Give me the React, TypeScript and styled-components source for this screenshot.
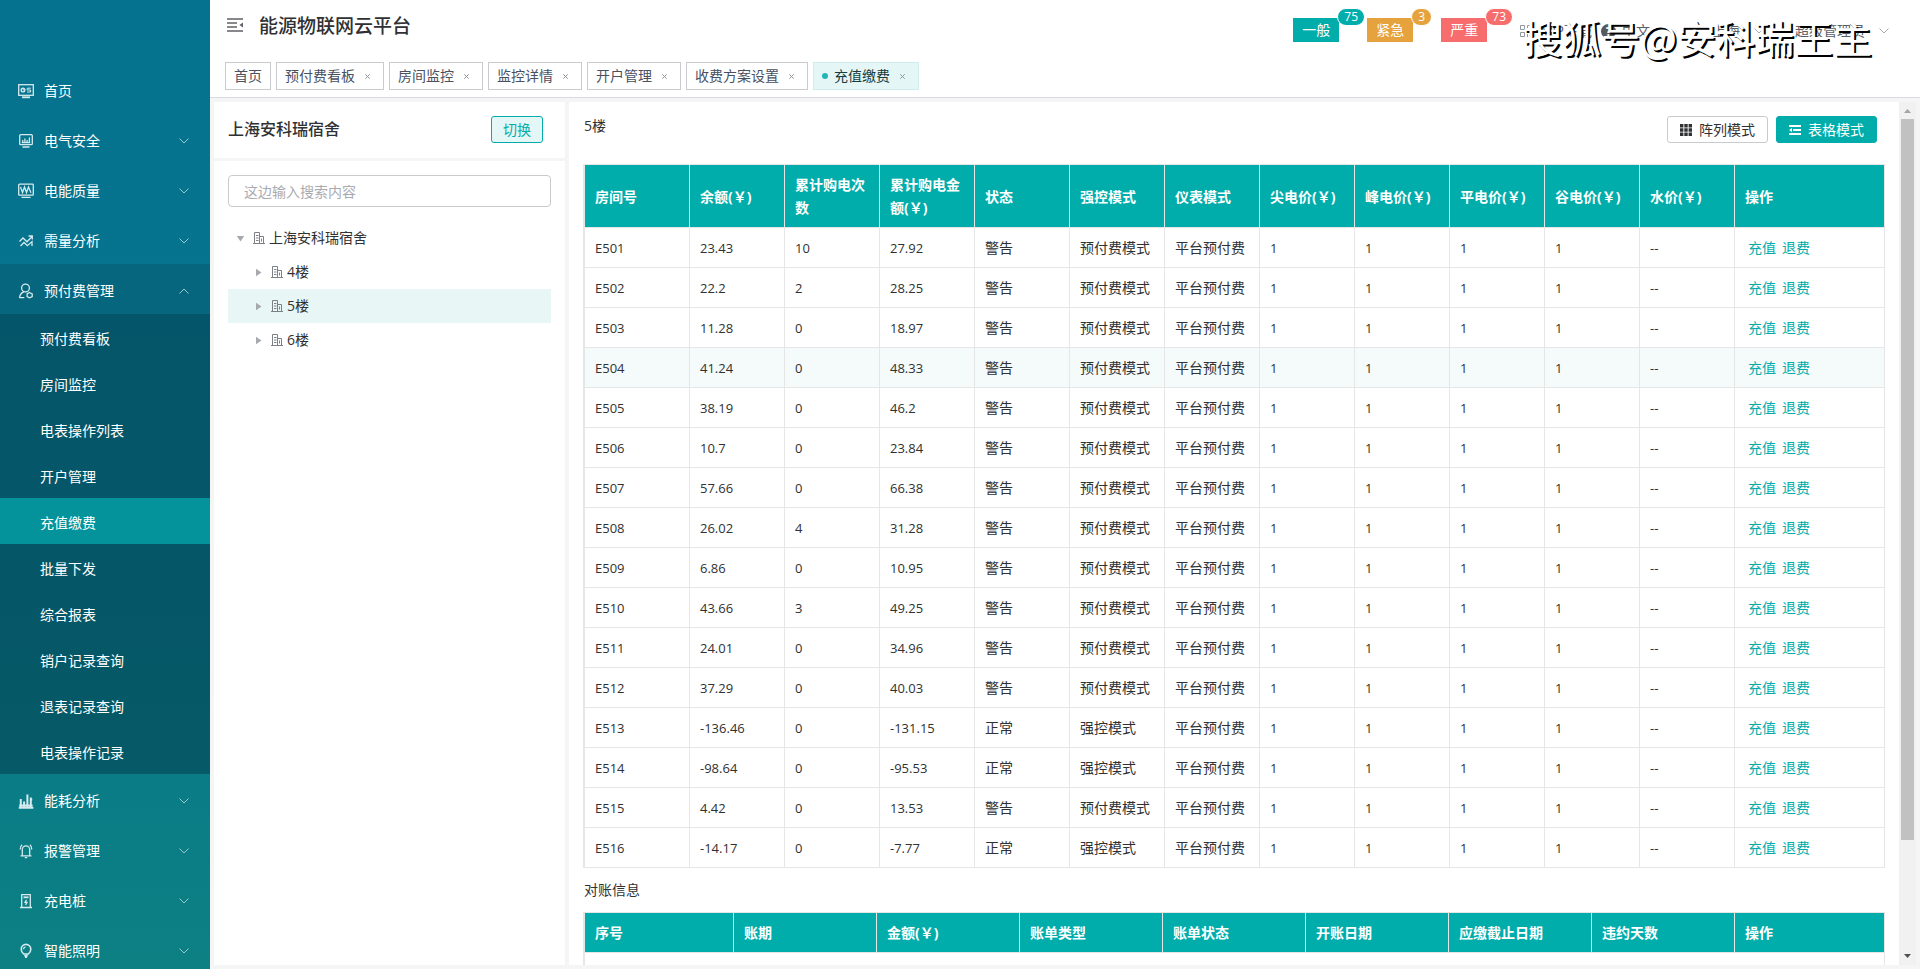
import React from "react";
import styled, { createGlobalStyle } from "styled-components";

const teal = "#00adab";
const line = "#e6e6e6";

const GlobalStyle = createGlobalStyle`
  * { box-sizing: border-box; }
  body {
    margin: 0;
    background: #f5f5f6;
    color: #303133;
    font: 14px/20px "Open Sans", "Noto Sans CJK SC", sans-serif;
  }
  button, input { font: inherit; }
  a { color: inherit; text-decoration: none; }
`;

const Shell = styled.div`
  display: flex;
  height: 100vh;
  overflow: hidden;
`;

/* ---------- sidebar ---------- */

const Sidebar = styled.nav`
  flex: 0 0 210px;
  padding-top: 64px;
  overflow: hidden;
  color: #fff;
  background: linear-gradient(180deg, #05738f 0%, #06748d 40%, #0c8083 100%);
`;

const MenuItem = styled.a<{ $open?: boolean }>`
  display: flex;
  align-items: center;
  height: 50px;
  padding: 3px 20px 0 18px;
  background: ${(p) => (p.$open ? "rgba(6, 86, 106, 0.45)" : "transparent")};
`;

const MenuIcon = styled.svg`
  width: 16px;
  height: 16px;
  margin-right: 10px;
  fill: none;
  stroke: #d5eaee;
  stroke-width: 1.3;
`;

const Arrow = styled.svg<{ $up?: boolean; $dark?: boolean }>`
  width: 12px;
  height: 6px;
  fill: none;
  stroke: ${(p) => (p.$dark ? "#a9adb3" : "#9cc8d0")};
  transform: ${(p) => (p.$up ? "rotate(180deg)" : "none")};
`;

const MenuLabel = styled.span`
  flex: 1;
`;

const SubMenu = styled.div`
  background: linear-gradient(180deg, #05556a, #065966);
`;

const SubItem = styled.a<{ $active?: boolean }>`
  display: block;
  padding: 3px 0 0 40px;
  line-height: 43px;
  background: ${(p) => (p.$active ? "#04939a" : "transparent")};
`;

/* ---------- header ---------- */

const Content = styled.div`
  flex: 1;
  min-width: 0;
  display: flex;
  flex-direction: column;
`;

const Header = styled.header`
  position: relative;
  height: 98px;
  background: #fff;
  border-bottom: 1px solid #d8dce0;
`;

const TopBar = styled.div`
  display: flex;
  height: 62px;
  padding: 0 30px 0 17px;
`;

const FoldButton = styled.button`
  width: 16px;
  height: 16px;
  margin: 17px 16px 0 0;
  padding: 0;
  border: 0;
  background: none;
  svg { display: block; }
`;

const Title = styled.h1`
  flex: 1;
  margin: 14px 0 0;
  font-size: 19px;
  line-height: 24px;
  font-weight: 500;
`;

const Alarms = styled.div`
  display: flex;
  gap: 28px;
  margin: 18px 33px 0 0;
`;

const Alarm = styled.a<{ $color: string }>`
  position: relative;
  width: 46px;
  height: 24px;
  line-height: 24px;
  text-align: center;
  color: #fff;
  background: ${(p) => p.$color};
`;

const Badge = styled.span<{ $color: string }>`
  position: absolute;
  left: 44px;
  top: -10px;
  height: 18px;
  padding: 0 6px;
  border: 1px solid #fff;
  border-radius: 9px;
  font-size: 12px;
  line-height: 16px;
  background: ${(p) => p.$color};
`;

const Tools = styled.div`
  display: flex;
  align-items: center;
  height: 62px;
  color: #5a5e66;
  white-space: nowrap;
`;

const Tool = styled.a<{ $gap: number }>`
  display: flex;
  align-items: center;
  gap: 6px;
  margin-right: ${(p) => p.$gap}px;
`;

const UserTool = styled(Tool)`
  gap: 13px;
`;

const Help = styled.span`
  width: 15px;
  height: 15px;
  border-radius: 8px;
  font-size: 12px;
  line-height: 15px;
  font-weight: 700;
  text-align: center;
  color: #fff;
  background: #55585e;
`;

const Watermark = styled.div`
  position: absolute;
  right: 48px;
  top: 12px;
  font-size: 39px;
  line-height: 48px;
  color: #fff;
  text-shadow: 2px 2px 0 #000;
  font-family: "Noto Sans CJK SC", sans-serif;
  white-space: nowrap;
`;

const Tabs = styled.div`
  display: flex;
  gap: 5px;
  padding-left: 15px;
`;

const Tab = styled.a<{ $active?: boolean }>`
  display: flex;
  align-items: center;
  height: 28px;
  padding: 0 8px;
  border: 1px solid ${(p) => (p.$active ? "#ccefee" : "#c9cbcf")};
  color: ${(p) => (p.$active ? "#163c3e" : "#495060")};
  background: ${(p) => (p.$active ? "#e4f6f5" : "#fff")};
`;

const Dot = styled.i`
  width: 6px;
  height: 6px;
  margin-right: 6px;
  border-radius: 3px;
  background: #25b3b6;
`;

const TabClose = styled.button`
  display: flex;
  align-items: center;
  justify-content: center;
  width: 16px;
  height: 16px;
  margin-left: 4px;
  padding: 0;
  border: 0;
  background: none;
`;

/* ---------- workspace ---------- */

const Workspace = styled.div`
  flex: 1;
  min-height: 0;
  display: flex;
  gap: 4px;
  padding: 4px;
`;

const LeftColumn = styled.aside`
  flex: 0 0 351px;
  display: flex;
  flex-direction: column;
  gap: 3px;
`;

const ProjectBar = styled.div`
  display: flex;
  align-items: flex-start;
  justify-content: space-between;
  height: 56px;
  padding: 14px 22px 0 14px;
  background: #fff;
`;

const ProjectName = styled.h2`
  margin: 0;
  font-size: 16px;
  line-height: 26px;
  font-weight: 500;
`;

const SwitchButton = styled.button`
  width: 52px;
  height: 27px;
  padding: 0;
  border: 1px solid ${teal};
  border-radius: 3px;
  color: ${teal};
  background: #e5f6f6;
`;

const TreePanel = styled.div`
  flex: 1;
  padding: 14px;
  background: #fff;
`;

const Search = styled.input`
  display: block;
  width: 100%;
  height: 32px;
  margin-bottom: 14px;
  padding: 0 15px;
  border: 1px solid #c8cacd;
  border-radius: 4px;
  &::placeholder { color: #a9abb0; opacity: 1; }
`;

const TreeRow = styled.div<{ $level: number; $active?: boolean }>`
  display: flex;
  align-items: center;
  height: 34px;
  padding-left: ${(p) => 8 + p.$level * 18}px;
  background: ${(p) => (p.$active ? "#e8f7f6" : "transparent")};
`;

const Caret = styled.svg`
  width: 9px;
  height: 9px;
  margin-right: 8px;
  fill: #a6a9ae;
`;

const BuildingIcon = styled.svg`
  width: 12px;
  height: 12px;
  margin-right: 4px;
  fill: none;
  stroke: #7d8087;
`;

const Main = styled.main`
  flex: 1;
  min-width: 0;
  display: flex;
  background: #fff;
`;

const Body = styled.div`
  flex: 1;
  min-width: 0;
  padding: 0 14px;
  overflow: hidden;
`;

const Toolbar = styled.div`
  display: flex;
  align-items: flex-start;
  gap: 8px;
  height: 62px;
  padding: 14px 8px 0 1px;
`;

const FloorName = styled.span`
  flex: 1;
`;

const ModeButton = styled.button<{ $primary?: boolean }>`
  display: flex;
  align-items: center;
  gap: 7px;
  height: 27px;
  padding: 0 12px;
  border: 1px solid ${(p) => (p.$primary ? teal : "#c8cacd")};
  border-radius: 3px;
  color: ${(p) => (p.$primary ? "#fff" : "#303133")};
  background: ${(p) => (p.$primary ? teal : "#fff")};
`;

const Table = styled.table`
  width: 100%;
  table-layout: fixed;
  border-collapse: separate;
  border-spacing: 0;
  border-top: 1px solid ${line};
  border-left: 2px solid ${line};
`;

const Col = styled.col<{ $width?: number }>`
  width: ${(p) => (p.$width ? `${p.$width}px` : "auto")};
`;

const Th = styled.th`
  height: 40px;
  padding: 8px 10px;
  border-right: 1px solid ${line};
  border-bottom: 1px solid ${line};
  line-height: 23px;
  font-weight: 700;
  text-align: left;
  color: #fff;
  background: ${teal};
`;

const Row = styled.tr<{ $hover?: boolean }>`
  background: ${(p) => (p.$hover ? "#f5fafb" : "#fff")};
`;

const Td = styled.td<{ $numeric?: boolean }>`
  height: 40px;
  padding: 0 10px;
  border-right: 1px solid ${line};
  border-bottom: 1px solid ${line};
  font-size: ${(p) => (p.$numeric ? 13 : 14)}px;
  white-space: nowrap;
`;

const Actions = styled.div`
  display: flex;
  gap: 6px;
  padding-left: 3px;
  color: ${teal};
`;

const SectionTitle = styled.h3`
  margin: 0;
  padding: 12px 0 12px 1px;
  font-size: 14px;
  line-height: 20px;
  font-weight: 400;
`;

const Rail = styled.div`
  flex: 0 0 17px;
  display: flex;
  flex-direction: column;
  background: #f1f1f1;
`;

const RailArrow = styled.svg`
  width: 17px;
  height: 17px;
`;

const Track = styled.div`
  flex: 1;
  padding: 0 2px;
`;

const Thumb = styled.div`
  height: 87%;
  background: #c1c1c1;
`;

/* ---------- data ---------- */

const icons: Record<string, React.ReactNode> = {
  home: (
    <>
      <rect x="0.7" y="1.7" width="14.6" height="10.6" />
      <path d="M4 14.3h8" strokeWidth="1.8" />
      <circle cx="5" cy="7" r="1.9" />
      <path d="M5 5v2h2M12.8 5.2H9.2V7h3.4v2H9" strokeWidth="1" />
    </>
  ),
  safety: (
    <>
      <rect x="1.7" y="1.7" width="12.6" height="10" rx="1" />
      <path d="M4.5 14h7M4.7 9.8V7M6.9 9.8V5.6M9.1 9.8V7M11.4 9.8V4.6M3.8 9.6h8.4" />
    </>
  ),
  quality: (
    <>
      <rect x="0.7" y="1.2" width="14.6" height="11" rx="0.8" />
      <path d="M3.5 14.4h9M2.5 4l2 5.5 2-5.5 2 5.5 2-5.5 2.5 5.8" />
    </>
  ),
  demand: (
    <path d="M1.5 8.5L5 5l4 3.8 5-5.3M10.5 3h3.8v3.6M2.5 13L6 9.5l3.4 3.2L14 8.6V13" />
  ),
  prepay: (
    <>
      <circle cx="7.5" cy="5" r="3.9" />
      <path d="M1.5 15c.3-3.3 2-5.3 4.6-6.3M1.5 14.6h4.8" />
      <path d="M11.5 9.5l2.7 1.4v2.8l-2.7 1.2-2.4-1.2v-2.8z" />
    </>
  ),
  energy: (
    <path
      d="M.8 14.8h14.6M2.8 14V6M6.1 14V8.5M9.4 14V1.6M12.8 14V4.5M1.2 12.6h13.4M1.8 8h2M11.8 6.5h2.4"
      strokeWidth="2"
    />
  ),
  alarm: (
    <>
      <path d="M2.5 12.8h11M4.3 12.5V6.6a3.7 3.7 0 0 1 7.4 0v5.9M6.8 14.7h2.4" />
      <path d="M2.2 6.5c0-2 .6-3.7 1.9-4.7M13.8 6.5c0-2-.6-3.7-1.9-4.7" />
    </>
  ),
  charger: (
    <>
      <path d="M3.7 14V1.6h8.6V14M2 14.5h12" />
      <path d="M5.5 4.3h5" strokeWidth="1.8" />
      <path d="M8.5 6.8L7 9.3h2l-1.4 2.6" />
    </>
  ),
  light: (
    <>
      <path d="M5.8 11C4 9.8 3.2 8.3 3.2 6.2a4.8 4.8 0 0 1 9.6 0c0 2.1-.8 3.6-2.6 4.8z" strokeWidth="1.6" />
      <path d="M6.2 12.7h3.6M7 14h2" strokeWidth="1.8" />
      <path d="M5.5 6.2a2.5 2.5 0 0 1 2-2.3" />
    </>
  ),
};

const menuTop = [
  ["home", "首页"],
  ["safety", "电气安全"],
  ["quality", "电能质量"],
  ["demand", "需量分析"],
];
const menuBottom = [
  ["energy", "能耗分析"],
  ["alarm", "报警管理"],
  ["charger", "充电桩"],
  ["light", "智能照明"],
];
const subMenu = [
  "预付费看板", "房间监控", "电表操作列表", "开户管理", "充值缴费",
  "批量下发", "综合报表", "销户记录查询", "退表记录查询", "电表操作记录",
];
const tabs = ["首页", "预付费看板", "房间监控", "监控详情", "开户管理", "收费方案设置", "充值缴费"];
const current = "充值缴费";

const roomHeads = [
  "房间号", "余额(￥)", "累计购电次数", "累计购电金额(￥)", "状态", "强控模式", "仪表模式",
  "尖电价(￥)", "峰电价(￥)", "平电价(￥)", "谷电价(￥)", "水价(￥)", "操作",
];
const billHeads = ["序号", "账期", "金额(￥)", "账单类型", "账单状态", "开账日期", "应缴截止日期", "违约天数", "操作"];

const rooms: [string, string, string, string, boolean?][] = [
  ["E501", "23.43", "10", "27.92"],
  ["E502", "22.2", "2", "28.25"],
  ["E503", "11.28", "0", "18.97"],
  ["E504", "41.24", "0", "48.33"],
  ["E505", "38.19", "0", "46.2"],
  ["E506", "10.7", "0", "23.84"],
  ["E507", "57.66", "0", "66.38"],
  ["E508", "26.02", "4", "31.28"],
  ["E509", "6.86", "0", "10.95"],
  ["E510", "43.66", "3", "49.25"],
  ["E511", "24.01", "0", "34.96"],
  ["E512", "37.29", "0", "40.03"],
  ["E513", "-136.46", "0", "-131.15", true],
  ["E514", "-98.64", "0", "-95.53", true],
  ["E515", "4.42", "0", "13.53"],
  ["E516", "-14.17", "0", "-7.77", true],
];

const alarms: [string, number, string][] = [
  ["一般", 75, teal],
  ["紧急", 3, "#e6a23c"],
  ["严重", 73, "#f76c6c"],
];

/* ---------- parts ---------- */

const Chevron = ({ up, dark }: { up?: boolean; dark?: boolean }) => (
  <Arrow $up={up} $dark={dark} viewBox="0 0 12 6" aria-hidden="true">
    <path d="M1.5.5L6 5 10.5.5" />
  </Arrow>
);

const Entry = ({ icon, label, open }: { icon: string; label: string; open?: boolean }) => (
  <MenuItem href="#" $open={open}>
    <MenuIcon viewBox="0 0 16 16" aria-hidden="true">{icons[icon]}</MenuIcon>
    <MenuLabel>{label}</MenuLabel>
    {icon !== "home" && <Chevron up={open} />}
  </MenuItem>
);

const TreeNode = ({ label, level, active }: { label: string; level: number; active?: boolean }) => (
  <TreeRow $level={level} $active={active}>
    <Caret viewBox="0 0 9 9" aria-hidden="true">
      <path d={level ? "M2 .8v7.4l5.5-3.7z" : "M.8 2h7.4L4.5 7.5z"} />
    </Caret>
    <BuildingIcon viewBox="0 0 12 12" aria-hidden="true">
      <path d="M0 11.5h12M1.500 11.5V.5h5v11M6.500 4.500h4v7M3 3.500h2.500M3 6h2.500M3 8.500h2.500M8.500 6.500v3" />
    </BuildingIcon>
    {label}
  </TreeRow>
);

export default function App() {
  return (
    <>
      <GlobalStyle />
      <Shell>
        <Sidebar>
          {menuTop.map(([icon, label]) => <Entry key={label} icon={icon} label={label} />)}
          <Entry icon="prepay" label="预付费管理" open />
          <SubMenu>
            {subMenu.map((label) => (
              <SubItem key={label} href="#" $active={label === current}>{label}</SubItem>
            ))}
          </SubMenu>
          {menuBottom.map(([icon, label]) => <Entry key={label} icon={icon} label={label} />)}
        </Sidebar>

        <Content>
          <Header>
            <TopBar>
              <FoldButton aria-label="收起菜单">
                <svg width="16" height="16" viewBox="0 0 16 16" fill="none" stroke="#5f6268" strokeWidth="1.5">
                  <path d="M0 2h16M0 6h10M0 10h10M0 14h16" />
                  <path d="M16 5.5v5L12.5 8z" fill="#5f6268" stroke="none" />
                </svg>
              </FoldButton>
              <Title>能源物联网云平台</Title>
              <Alarms>
                {alarms.map(([label, count, color]) => (
                  <Alarm key={label} href="#" $color={color}>
                    {label}
                    <Badge $color={color}>{count}</Badge>
                  </Alarm>
                ))}
              </Alarms>
              <Tools>
                <Tool href="#" $gap={9}>
                  <svg width="12" height="12" viewBox="0 0 12 12" fill="none" stroke="#92969c">
                    <path d="M.5.5h4v4h-4zM7.5.5h4v4h-4zM.5 7.5h4v4h-4zM7 7.5h2M11.5 7v2M7.5 9v3M9.5 10.5h2" />
                  </svg>
                  APP下载
                </Tool>
                <Tool href="#" $gap={62}><Help>?</Help> 中文</Tool>
                <UserTool href="#" $gap={30}>上海 <Chevron dark /></UserTool>
                <UserTool href="#" $gap={0}>超级管理员 <Chevron dark /></UserTool>
              </Tools>
            </TopBar>
            <Tabs>
              {tabs.map((label, i) => (
                <Tab key={label} href="#" $active={label === current}>
                  {label === current && <Dot />}
                  {label}
                  {i > 0 && (
                    <TabClose aria-label={`关闭${label}`}>
                      <svg width="5" height="5" viewBox="0 0 5 5" stroke="#8f949b">
                        <path d="M.3.3l4.4 4.4M4.7.3L.3 4.7" />
                      </svg>
                    </TabClose>
                  )}
                </Tab>
              ))}
            </Tabs>
            <Watermark>搜狐号@安科瑞王主</Watermark>
          </Header>

          <Workspace>
            <LeftColumn>
              <ProjectBar>
                <ProjectName>上海安科瑞宿舍</ProjectName>
                <SwitchButton>切换</SwitchButton>
              </ProjectBar>
              <TreePanel>
                <Search type="text" aria-label="搜索" placeholder="这边输入搜索内容" />
                <TreeNode level={0} label="上海安科瑞宿舍" />
                <TreeNode level={1} label="4楼" />
                <TreeNode level={1} label="5楼" active />
                <TreeNode level={1} label="6楼" />
              </TreePanel>
            </LeftColumn>

            <Main>
              <Body>
                <Toolbar>
                  <FloorName>5楼</FloorName>
                  <ModeButton>
                    <svg width="12" height="12" viewBox="0 0 12 12" fill="#303133">
                      <path d="M0 0h3.4v3.4H0zM4.3 0h3.4v3.4H4.3zM8.6 0H12v3.4H8.6zM0 4.3h3.4v3.4H0zM4.3 4.3h3.4v3.4H4.3zM8.6 4.3H12v3.4H8.6zM0 8.6h3.4V12H0zM4.3 8.6h3.4V12H4.3zM8.6 8.6H12V12H8.6z" />
                    </svg>
                    阵列模式
                  </ModeButton>
                  <ModeButton $primary>
                    <svg width="12" height="12" viewBox="0 0 12 12" fill="#fff">
                      <path d="M0 1h12v2H0zM4 5h8v2H4zM0 9h12v2H0zM3 4v4L0 6z" />
                    </svg>
                    表格模式
                  </ModeButton>
                </Toolbar>

                <Table>
                  <colgroup>
                    {roomHeads.map((h, i) => (
                      <Col key={h} $width={i === 0 ? 105 : i === 12 ? 150 : undefined} />
                    ))}
                  </colgroup>
                  <thead>
                    <tr>{roomHeads.map((h) => <Th key={h} scope="col">{h}</Th>)}</tr>
                  </thead>
                  <tbody>
                    {rooms.map(([room, balance, times, total, normal]) => (
                      <Row key={room} $hover={room === "E504"}>
                        {[room, balance, times, total].map((v, i) => <Td key={i} $numeric>{v}</Td>)}
                        <Td>{normal ? "正常" : "警告"}</Td>
                        <Td>{normal ? "强控模式" : "预付费模式"}</Td>
                        <Td>平台预付费</Td>
                        {["1", "1", "1", "1", "--"].map((v, i) => <Td key={i} $numeric>{v}</Td>)}
                        <Td>
                          <Actions>
                            <a href="#">充值</a>
                            <a href="#">退费</a>
                          </Actions>
                        </Td>
                      </Row>
                    ))}
                  </tbody>
                </Table>

                <SectionTitle>对账信息</SectionTitle>

                <Table>
                  <colgroup>
                    {billHeads.map((h, i) => (
                      <Col key={h} $width={i === 0 ? 149 : i === 8 ? 150 : undefined} />
                    ))}
                  </colgroup>
                  <thead>
                    <tr>{billHeads.map((h) => <Th key={h} scope="col">{h}</Th>)}</tr>
                  </thead>
                  <tbody>
                    <Row><Td colSpan={9} /></Row>
                  </tbody>
                </Table>
              </Body>
              <Rail aria-hidden="true">
                <RailArrow viewBox="0 0 17 17"><path d="M5 11h7L8.5 7z" fill="#a3a3a3" /></RailArrow>
                <Track><Thumb /></Track>
                <RailArrow viewBox="0 0 17 17"><path d="M5 6h7l-3.5 4z" fill="#505050" /></RailArrow>
              </Rail>
            </Main>
          </Workspace>
        </Content>
      </Shell>
    </>
  );
}
